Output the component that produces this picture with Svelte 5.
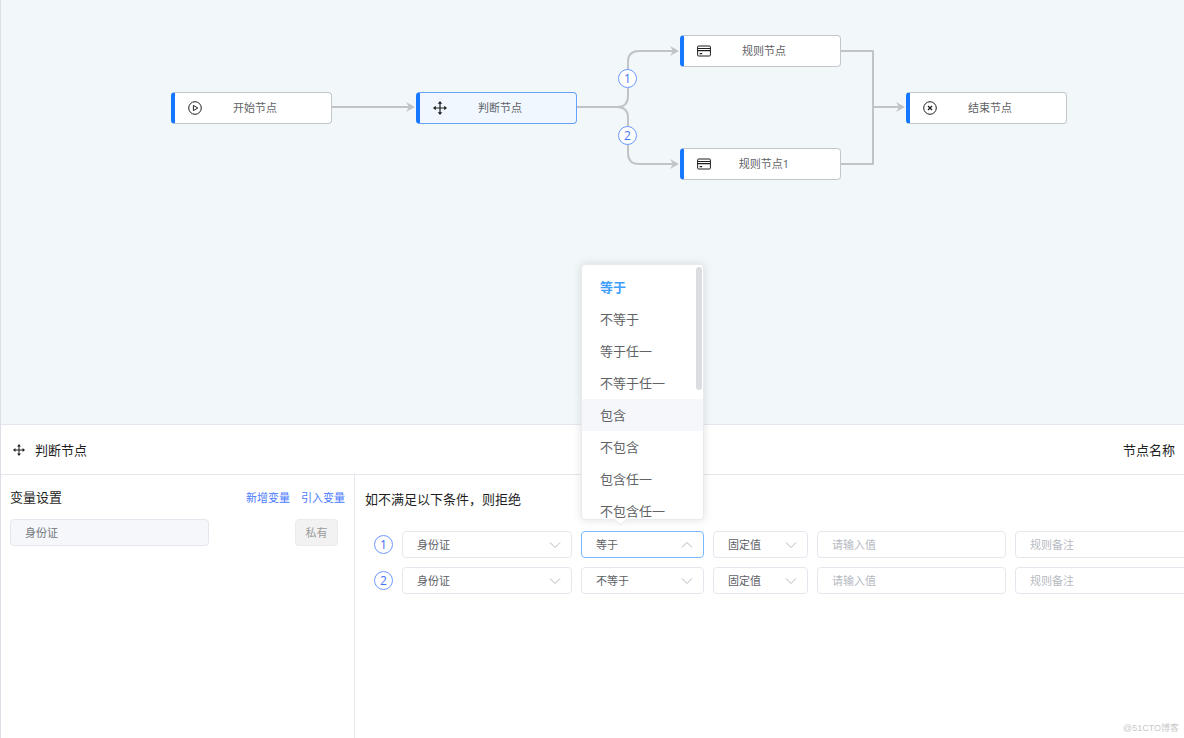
<script>
  const nodes = [
    { name: "开始节点", icon: "play", x: 171, y: 92 },
    { name: "判断节点", icon: "move", x: 416, y: 92, active: true },
    { name: "规则节点", icon: "card", x: 680, y: 35 },
    { name: "规则节点1", icon: "card", x: 680, y: 148 },
    { name: "结束节点", icon: "close", x: 906, y: 92 },
  ];

  const edges = [
    "M332 107H410",
    "M577 107H617Q628 107 628 96V62Q628 51 639 51H674",
    "M617 107Q628 107 628 118V153Q628 164 639 164H674",
    "M841 51H873V164H841",
    "M873 107H900",
  ];

  const arrows = [
    [415, 107],
    [679, 51],
    [679, 164],
    [905, 107],
  ];

  const branches = [
    { no: 1, x: 618, y: 69 },
    { no: 2, x: 618, y: 126 },
  ];

  const operators = [
    "等于",
    "不等于",
    "等于任一",
    "不等于任一",
    "包含",
    "不包含",
    "包含任一",
    "不包含任一",
  ];

  let hovered = $state("包含");
  let openRow = $state(0);

  let rules = $state([
    { field: "身份证", op: "等于", type: "固定值", value: "", note: "" },
    { field: "身份证", op: "不等于", type: "固定值", value: "", note: "" },
  ]);

  function pick(i, op) {
    rules[i].op = op;
    openRow = -1;
  }
</script>

{#snippet icon(name)}
  <svg class="icon" viewBox="0 0 14 14" aria-hidden="true">
    {#if name === "play"}
      <circle cx="7" cy="7" r="6.3" />
      <path d="M5.4 4.4v5.2L9.8 7z" />
    {:else if name === "close"}
      <circle cx="7" cy="7" r="6.3" />
      <path d="M5 5l4 4M9 5l-4 4" stroke-width="1.3" />
    {:else if name === "card"}
      <rect x="0.6" y="2" width="12.8" height="10" rx="1" />
      <path d="M0.6 4.5h12.8M0.6 6.7h12.8M2.6 9.7h2.6" stroke-width="1.2" />
    {:else}
      <path d="M7 1.5v11M1.5 7h11" stroke-width="1.2" />
      <path
        class="solid"
        d="M7 0l2.2 2.8H4.8zM7 14l2.2-2.8H4.8zM0 7l2.8-2.2v4.4zM14 7l-2.8-2.2v4.4z"
      />
    {/if}
  </svg>
{/snippet}

{#snippet chevron(up)}
  <svg class="chevron" class:up viewBox="0 0 12 12" aria-hidden="true">
    <path d="M1 3.5l5 5 5-5" />
  </svg>
{/snippet}

<main>
  <section class="canvas">
    <svg class="edges" aria-hidden="true">
      {#each edges as d}
        <path {d} />
      {/each}
      {#each arrows as [x, y]}
        <polygon points="{x},{y} {x - 9},{y - 5} {x - 6},{y} {x - 9},{y + 5}" />
      {/each}
    </svg>
    {#each nodes as node}
      <div
        class="node"
        class:active={node.active}
        style="left: {node.x}px; top: {node.y}px"
      >
        {@render icon(node.icon)}
        <span>{node.name}</span>
      </div>
    {/each}
    {#each branches as b}
      <span class="badge branch" style="left: {b.x}px; top: {b.y}px">{b.no}</span>
    {/each}
  </section>

  <section class="panel">
    <header>
      {@render icon("move")}
      <h2>判断节点</h2>
      <span class="right">节点名称</span>
    </header>

    <div class="body">
      <aside>
        <div class="aside-head">
          <h3>变量设置</h3>
          <a href="#add">新增变量</a>
          <a href="#import">引入变量</a>
        </div>
        <div class="variable">
          <input type="text" value="身份证" aria-label="变量" disabled />
          <button type="button" disabled>私有</button>
        </div>
      </aside>

      <div class="rules">
        <h3>如不满足以下条件，则拒绝</h3>
        {#each rules as rule, i}
          <div class="rule">
            <span class="badge">{i + 1}</span>
            <div class="select field">
              <select bind:value={rule.field} aria-label="变量">
                <option>身份证</option>
              </select>
              {@render chevron(false)}
            </div>
            <div class="select op" class:open={openRow === i}>
              <select bind:value={rule.op} aria-label="条件">
                {#each operators as op}
                  <option>{op}</option>
                {/each}
              </select>
              {@render chevron(openRow === i)}
              {#if openRow === i}
                <div class="popper">
                  <ul>
                    {#each operators as op}
                      <li>
                        <button
                          type="button"
                          class:selected={op === rule.op}
                          class:hover={op === hovered}
                          onmouseenter={() => (hovered = op)}
                          onclick={() => pick(i, op)}>{op}</button
                        >
                      </li>
                    {/each}
                  </ul>
                  <div class="thumb"></div>
                </div>
              {/if}
            </div>
            <div class="select type">
              <select bind:value={rule.type} aria-label="类型">
                <option>固定值</option>
              </select>
              {@render chevron(false)}
            </div>
            <input
              type="text"
              placeholder="请输入值"
              aria-label="值"
              bind:value={rule.value}
            />
            <input
              type="text"
              placeholder="规则备注"
              aria-label="备注"
              bind:value={rule.note}
            />
          </div>
        {/each}
      </div>
    </div>
    <span class="watermark">@51CTO博客</span>
  </section>
</main>

<style>
  :global(body) {
    margin: 0;
    overflow-x: hidden;
  }
  * {
    box-sizing: border-box;
  }
  main {
    display: flex;
    flex-direction: column;
    min-height: 100vh;
    border-left: 1px solid #dcdfe6;
    font-family: "Open Sans", "Noto Sans CJK SC", sans-serif;
    font-size: 11px;
    color: #606266;
  }
  h2,
  h3 {
    margin: 0;
    font-size: 13px;
    line-height: 20px;
    font-weight: 400;
    color: #1f1f1f;
  }
  input,
  select,
  button {
    font: inherit;
    color: inherit;
  }

  /* flow canvas */
  .canvas {
    position: relative;
    height: 424px;
    margin-left: -1px;
    border-left: 1px solid #dcdfe6;
    background: #f2f7fa;
  }
  .edges {
    position: absolute;
    top: 0;
    left: -1px;
    width: 100%;
    height: 100%;
  }
  .edges path {
    fill: none;
    stroke: #c0c4c8;
    stroke-width: 2;
    stroke-linejoin: round;
  }
  .edges polygon {
    fill: #c0c4c8;
  }
  .node {
    position: absolute;
    display: flex;
    align-items: center;
    width: 161px;
    height: 32px;
    margin-left: -1px;
    padding: 0 23px 0 13px;
    border: 1px solid #c3c7cc;
    border-left: 4px solid #1677ff;
    border-radius: 4px;
    background: #fff;
  }
  .node.active {
    border-color: #66a3f8;
    border-left-color: #1677ff;
    background: #f0f7ff;
  }
  .node span {
    flex: 1;
    padding-bottom: 2px;
    text-align: center;
  }
  .icon {
    flex: none;
    width: 14px;
    height: 14px;
    fill: none;
    stroke: #1f1f1f;
    stroke-width: 1;
  }
  .icon .solid {
    fill: #1f1f1f;
    stroke: none;
  }
  .badge {
    flex: none;
    width: 19px;
    height: 19px;
    border: 1px solid #6f98ff;
    border-radius: 50%;
    background: #fff;
    color: #4373f5;
    font-size: 12px;
    line-height: 17px;
    text-align: center;
  }
  .branch {
    position: absolute;
    margin-left: -1px;
  }

  /* bottom panel */
  .panel {
    position: relative;
    flex: 1;
    display: flex;
    flex-direction: column;
    border-top: 1px solid #e4e7ed;
    background: #fff;
  }
  header {
    display: flex;
    align-items: center;
    gap: 10px;
    height: 50px;
    padding: 0 9px 0 12px;
    border-bottom: 1px solid #e4e7ed;
  }
  header .icon {
    width: 12px;
    height: 12px;
  }
  header .right {
    margin-left: auto;
    font-size: 13px;
    line-height: 20px;
    color: #1f1f1f;
  }
  .body {
    flex: 1;
    display: flex;
  }
  aside {
    flex: none;
    width: 354px;
    padding: 12px 9px;
    border-right: 1px solid #e4e7ed;
  }
  .aside-head {
    display: flex;
    align-items: center;
    gap: 11px;
  }
  .aside-head h3 {
    margin-right: auto;
  }
  a {
    padding-bottom: 1px;
    color: #4a79ff;
    text-decoration: none;
  }
  .variable {
    display: flex;
    justify-content: space-between;
    margin-top: 12px;
    padding-right: 7px;
  }
  input,
  select {
    width: 100%;
    height: 27px;
    padding: 0 14px;
    border: 1px solid #e4e7ed;
    border-radius: 4px;
    background: #fff;
    outline: none;
  }
  input::placeholder {
    color: #b6bac2;
    opacity: 1;
  }
  .variable input {
    width: 199px;
    padding-bottom: 2px;
    background: #f5f7fa;
    color: #73767a;
  }
  .variable button {
    width: 43px;
    height: 27px;
    padding: 0 0 2px;
    border: 1px solid #ebebeb;
    border-radius: 4px;
    background: #f2f2f2;
    color: #9a9a9a;
  }
  .rules {
    flex: 1;
    min-width: 0;
    padding: 14px 0 14px 10px;
  }
  .rules h3 {
    margin-bottom: 22px;
  }
  .rule {
    display: flex;
    align-items: center;
    gap: 9px;
    margin-bottom: 9px;
    padding-left: 9px;
  }
  .rule > input {
    flex: none;
    width: 189px;
  }
  .select {
    position: relative;
    flex: none;
  }
  .field {
    width: 170px;
  }
  .op {
    width: 123px;
  }
  .type {
    width: 95px;
  }
  select {
    display: block;
    appearance: none;
  }
  .open select {
    border-color: #79b8ff;
  }
  .chevron {
    position: absolute;
    top: 8px;
    right: 11px;
    width: 12px;
    height: 12px;
    fill: none;
    stroke: #b4b8bf;
    pointer-events: none;
  }
  .chevron.up {
    transform: rotate(180deg);
  }
  .popper {
    position: absolute;
    bottom: 38px;
    left: 0;
    z-index: 2;
    width: 100%;
    height: 256px;
    border: 1px solid #e8eaee;
    border-radius: 4px;
    background: #fff;
    box-shadow: 0 0 10px rgba(0, 0, 0, 0.12);
  }
  .popper::after {
    content: "";
    position: absolute;
    bottom: -5px;
    left: 34px;
    width: 8px;
    height: 8px;
    border: solid #e8eaee;
    border-width: 0 1px 1px 0;
    background: #fff;
    transform: rotate(45deg);
    z-index: -1;
  }
  ul {
    height: 100%;
    margin: 0;
    padding: 6px 0 0;
    list-style: none;
    overflow-y: auto;
    scrollbar-width: none;
  }
  li button {
    display: block;
    width: 100%;
    height: 32px;
    padding: 0 18px 2px;
    border: 0;
    background: none;
    font-size: 13px;
    text-align: left;
  }
  li button.hover {
    background: #f5f7fa;
  }
  li button.selected {
    color: #409eff;
    font-weight: 700;
  }
  .thumb {
    position: absolute;
    top: 2px;
    right: 1px;
    width: 6px;
    height: 123px;
    border-radius: 3px;
    background: #dcdde0;
  }
  .watermark {
    position: absolute;
    right: 5px;
    bottom: 4px;
    font-family: "Liberation Sans", "Noto Sans CJK SC", sans-serif;
    font-size: 9px;
    color: #c8c8c8;
  }
</style>
